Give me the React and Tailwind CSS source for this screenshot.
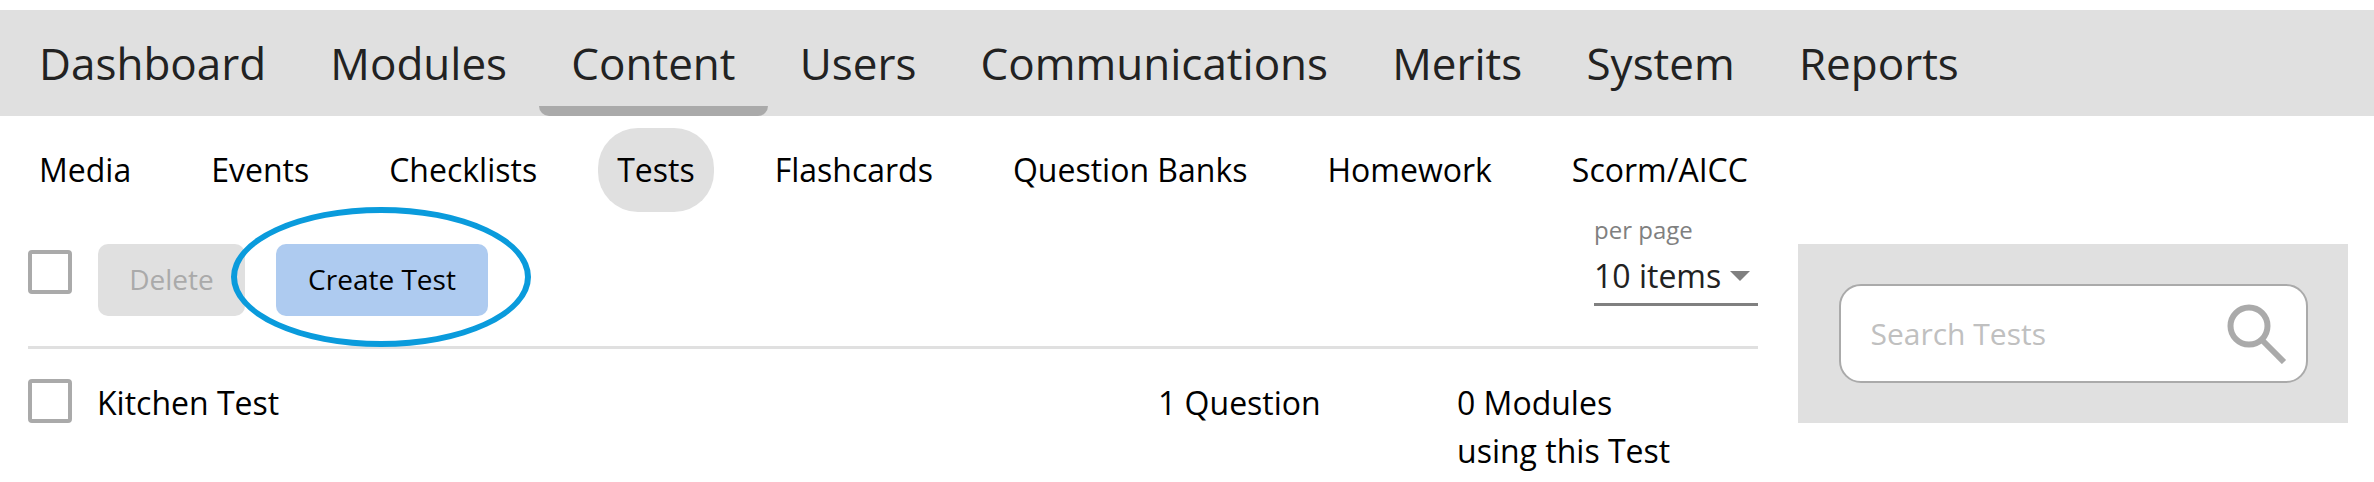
import React from 'react';

const mainNav = ['Dashboard', 'Modules', 'Content', 'Users', 'Communications', 'Merits', 'System', 'Reports'];
const subNav = ['Media', 'Events', 'Checklists', 'Tests', 'Flashcards', 'Question Banks', 'Homework', 'Scorm/AICC'];

const Checkbox = () => (
    <div className="w-[44px] h-[44px] shrink-0 border-[4px] border-[#aaaaaa] rounded-[4px] bg-white"></div>
);

const App = () => {
    return (
        <div className="h-[482px] w-[2374px] overflow-hidden bg-white pt-[10px] text-black font-['Open_Sans',sans-serif]">
            {/* Main nav */}
            <div className="flex h-[106px] bg-[#e0e0e0] pl-[7px] text-[#222222]">
                {mainNav.map((item) => (
                    <div key={item} className="relative flex h-full items-center px-[32.1px] text-[44px]">
                        {item}
                        {item === 'Content' && (
                            <div className="absolute inset-x-0 bottom-0 h-[10px] rounded-b-[10px] bg-[#aaaaaa]"></div>
                        )}
                    </div>
                ))}
            </div>

            <div className="mt-[12px] flex">
                <div className="ml-[28px] w-[1730px] shrink-0">
                    {/* Sub nav */}
                    <div className="flex h-[84px] items-center pl-[11px] text-[32px]">
                        {subNav.map((item) => (
                            <div
                                key={item}
                                className={item === 'Tests'
                                    ? 'mx-[21px] flex h-[84px] items-center rounded-[40px] bg-[#e0e0e0] px-[19px]'
                                    : 'mr-[80px] last:mr-0 [&:nth-child(3)]:mr-[40px] [&:nth-child(5)]:ml-[40px]'}
                            >
                                {item}
                            </div>
                        ))}
                    </div>

                    {/* Toolbar */}
                    <div className="relative flex h-[137px] items-start border-b-[3px] border-[#e0e0e0]">
                        <div className="mt-[38px]"><Checkbox /></div>
                        <button className="ml-[26px] mt-[32px] h-[72px] w-[147px] rounded-[10px] bg-[#e0e0e0] pb-[2px] text-[28px] text-[#aaaaaa]">Delete</button>
                        <button className="ml-[31px] mt-[32px] h-[72px] w-[212px] rounded-[10px] bg-[#aecbf0] pb-[2px] text-[28px] text-black">Create Test</button>
                        {/* Highlight ring */}
                        <div className="absolute left-[203px] top-[-5px] h-[140px] w-[300px] rounded-[50%] border-[6px] border-[#0a9bdc]"></div>

                        <div className="ml-auto mt-[4px] w-[164px]">
                            <div className="text-[24px] leading-[28px] text-[#808080]">per page</div>
                            <div className="relative mt-[6px] h-[56px] border-b-[3px] border-[#808080] pt-[3px] text-[32px] leading-[46px] text-[#222222]">
                                10 items
                                <svg className="absolute right-[8px] top-[21px]" width="20" height="10" viewBox="0 0 20 10">
                                    <path d="M0 0H20L10 10Z" fill="#808080" />
                                </svg>
                            </div>
                        </div>
                    </div>

                    {/* Test row */}
                    <div className="flex items-start pt-[28px] text-[32px] leading-[48px]">
                        <div className="mt-[2px]"><Checkbox /></div>
                        <div className="ml-[25px] w-[1061px] mt-[2px]">Kitchen Test</div>
                        <div className="w-[299px] mt-[2px]">1 Question</div>
                        <div className="w-[290px] mt-[2px]">0 Modules<br />using this Test</div>
                    </div>
                </div>

                {/* Search panel */}
                <div className="ml-[40px] mt-[116px] flex h-[179px] w-[550px] items-center justify-center bg-[#e0e0e0]">
                    <div className="flex h-[99px] w-[469px] items-center justify-between rounded-[22px] border-[2px] border-[#aaaaaa] bg-white pl-[30px] pr-[19px]">
                        <span className="text-[30px] text-[#c0c0c0]">Search Tests</span>
                        <svg width="60" height="60" viewBox="0 0 60 60" fill="none" stroke="#aaaaaa">
                            <circle cx="22" cy="22" r="18.5" strokeWidth="6" />
                            <path d="M35 36L57 58" strokeWidth="6" />
                        </svg>
                    </div>
                </div>
            </div>
        </div>
    );
};

export default App;
